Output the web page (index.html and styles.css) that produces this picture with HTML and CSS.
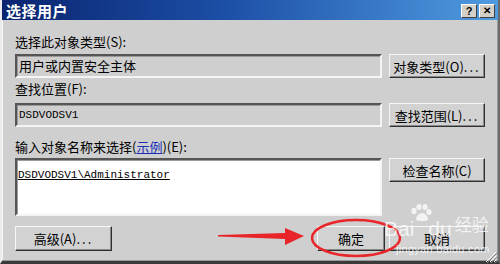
FILE: index.html
```html
<!DOCTYPE html>
<html lang="zh-CN">
  <head>
    <meta charset="UTF-8" />
    <title>选择用户</title>
    <link rel="stylesheet" href="styles.css">
  </head>
  <body>
    <div class="dialog">
      <div class="titlebar">
        <span class="title">选择用户</span>
        <span class="tb-btns">
          <span class="tb-btn">?</span>
          <span class="tb-btn close">✕</span>
        </span>
      </div>

      <div class="content">
        <div class="label label-first">选择此对象类型(S):</div>
        <div class="row">
          <div class="field">用户或内置安全主体</div>
          <button class="btn side">对象类型(O)<span class="dots">...</span></button>
        </div>

        <div class="label">查找位置(F):</div>
        <div class="row">
          <div class="field mono">DSDVODSV1</div>
          <button class="btn side">查找范围(L)<span class="dots">...</span></button>
        </div>

        <div class="label label-third">输入对象名称来选择(<a class="link">示例</a>)(E):</div>
        <div class="row">
          <div class="textbox"><span class="mono resolved">DSDVODSV1\Administrator</span></div>
          <button class="btn side">检查名称(C)</button>
        </div>

        <div class="footer">
          <button class="btn advanced">高级(A)<span class="dots">...</span></button>
          <div class="spacer"></div>
          <button class="btn ok">确定</button>
          <button class="btn cancel">取消</button>
        </div>
      </div>

      <div class="grip">
        <svg width="12" height="12" viewBox="0 0 12 12">
          <path d="M11 1 L1 11 M11 5 L5 11 M11 9 L9 11" stroke="#fff" stroke-width="1" />
          <path d="M12 2 L2 12 M12 6 L6 12 M12 10 L10 12" stroke="#808080" stroke-width="1" />
        </svg>
      </div>
    </div>

    <!-- 标注：箭头和红圈 -->
    <svg class="marks" width="500" height="264" viewBox="0 0 500 264">
      <polygon points="218,235 285,233 285,228 304,236 285,245 285,239 218,236.5" fill="#e8262a" />
      <ellipse cx="356" cy="238" rx="44" ry="18" fill="none" stroke="#e8262a" stroke-width="2.5" />
    </svg>

    <!-- 水印 -->
    <div class="watermark">
      <div class="wm-top">
        <span class="wm-logo">Bai</span>
        <svg class="paw" width="22" height="18" viewBox="0 0 22 18">
          <ellipse cx="4" cy="7" rx="2.6" ry="3.2" />
          <ellipse cx="9" cy="3" rx="2.6" ry="3" />
          <ellipse cx="15" cy="3" rx="2.6" ry="3" />
          <ellipse cx="19" cy="8" rx="2.5" ry="3" />
          <path d="M6 16 C6 11 10 9 12 9 C15 9 18 12 18 16 C15 17.5 9 17.5 6 16 Z" />
        </svg>
        <span class="wm-logo du">du</span>
        <span class="wm-cn">经验</span>
      </div>
      <div class="wm-url">jingyan.baidu.com</div>
    </div>
  </body>
</html>
```

FILE: styles.css
```css
body {
  margin: 0;
  width: 500px;
  height: 264px;
  overflow: hidden;
  position: relative;
  font-family: "Noto Sans CJK SC", "Liberation Sans", sans-serif;
  font-size: 13px;
  color: #000;
  background-color: #cfcfcf;
}
.dialog {
  width: 500px;
  height: 264px;
  box-sizing: border-box;
  background-color: #cfcfcf;
  border-left: 2px solid #ececec;
  border-right: 2px solid #6a6a6a;
  border-bottom: 3px solid #3a3a3a;
  box-shadow: inset -1px -1px 0 #9a9a9a, inset 1px 0 0 #f8f8f8;
  display: flex;
  flex-direction: column;
  position: relative;
}
.titlebar {
  height: 20px;
  background: linear-gradient(to right, #0a2470 0%, #1c4fa6 45%, #4f9be0 100%);
  display: flex;
  align-items: center;
  justify-content: space-between;
  padding: 0 3px 0 4px;
}
.title {
  color: #fff;
  font-weight: bold;
  font-size: 15px;
  letter-spacing: 0.5px;
}
.tb-btns {
  display: flex;
  gap: 2px;
  margin-top: 1px;
}
.tb-btn {
  width: 16px;
  height: 14px;
  box-sizing: border-box;
  background-color: #d4d0c8;
  border: 1px solid;
  border-color: #fff #404040 #404040 #fff;
  font-family: "Liberation Sans", sans-serif;
  font-weight: bold;
  font-size: 11px;
  line-height: 12px;
  text-align: center;
  color: #000;
}
.tb-btn.close {
  font-size: 10px;
}
.content {
  padding: 0 13px 0 13px;
  display: flex;
  flex-direction: column;
}
.label {
  height: 18px;
  line-height: 18px;
  margin-top: 2px;
  margin-bottom: 5px;
  white-space: nowrap;
}
.label-first {
  margin-top: 13px;
  margin-bottom: 3px;
}
.label-third {
  margin-top: 11px;
  margin-bottom: 2px;
}
.link {
  color: #1a2fb8;
  text-decoration: underline;
}
.row {
  display: flex;
  gap: 7px;
  align-items: flex-start;
}
.field {
  flex: 1;
  height: 24px;
  box-sizing: border-box;
  border: 2px solid;
  border-color: #555 #f4f4f4 #f4f4f4 #555;
  box-shadow: inset 1px 1px 0 #9a9a9a;
  padding: 0 0 0 2px;
  line-height: 20px;
  white-space: nowrap;
}
.mono {
  font-family: "Liberation Mono", monospace;
  font-size: 11px;
}
.textbox {
  flex: 1;
  height: 58px;
  box-sizing: border-box;
  background-color: #fff;
  border: 2px solid;
  border-color: #555 #f4f4f4 #f4f4f4 #555;
  box-shadow: inset 1px 1px 0 #9a9a9a;
  padding: 6px 0 0 1px;
  line-height: 14px;
}
.resolved {
  text-decoration: underline;
}
.btn {
  height: 24px;
  box-sizing: border-box;
  background-color: #d2d2d2;
  border: 1px solid;
  border-color: #f6f6f6 #303030 #303030 #f6f6f6;
  box-shadow: inset -1px -1px 0 #888;
  font-family: "Noto Sans CJK SC", "Liberation Sans", sans-serif;
  font-size: 13px;
  color: #000;
  padding: 0;
  white-space: nowrap;
}
.side {
  width: 96px;
}
.dots {
  letter-spacing: 2px;
}
.footer {
  display: flex;
  gap: 4px;
  margin-top: 10px;
}
.footer .btn {
  height: 25px;
}
.advanced {
  width: 97px;
}
.spacer {
  flex: 1;
}
.ok {
  width: 68px;
}
.cancel {
  width: 96px;
}
.grip {
  position: absolute;
  right: 1px;
  bottom: 1px;
  width: 12px;
  height: 12px;
}
.marks {
  position: absolute;
  left: 0;
  top: 0;
  pointer-events: none;
}
.watermark {
  position: absolute;
  left: 384px;
  top: 204px;
  color: rgba(255, 255, 255, 0.75);
  pointer-events: none;
}
.wm-top {
  display: flex;
  align-items: flex-end;
  height: 36px;
}
.wm-logo {
  font-family: "Liberation Sans", sans-serif;
  font-size: 21px;
  line-height: 22px;
}
.paw {
  fill: rgba(255, 255, 255, 0.75);
  margin: 0 -6px 18px -4px;
}
.wm-logo.du {
  margin-left: 2px;
}
.wm-cn {
  font-size: 17px;
  line-height: 22px;
  margin-left: 3px;
  margin-bottom: 5px;
}
.wm-url {
  font-family: "Liberation Sans", sans-serif;
  font-size: 11px;
  line-height: 12px;
  margin-left: 12px;
  margin-top: 3px;
  letter-spacing: 0.3px;
}
```
